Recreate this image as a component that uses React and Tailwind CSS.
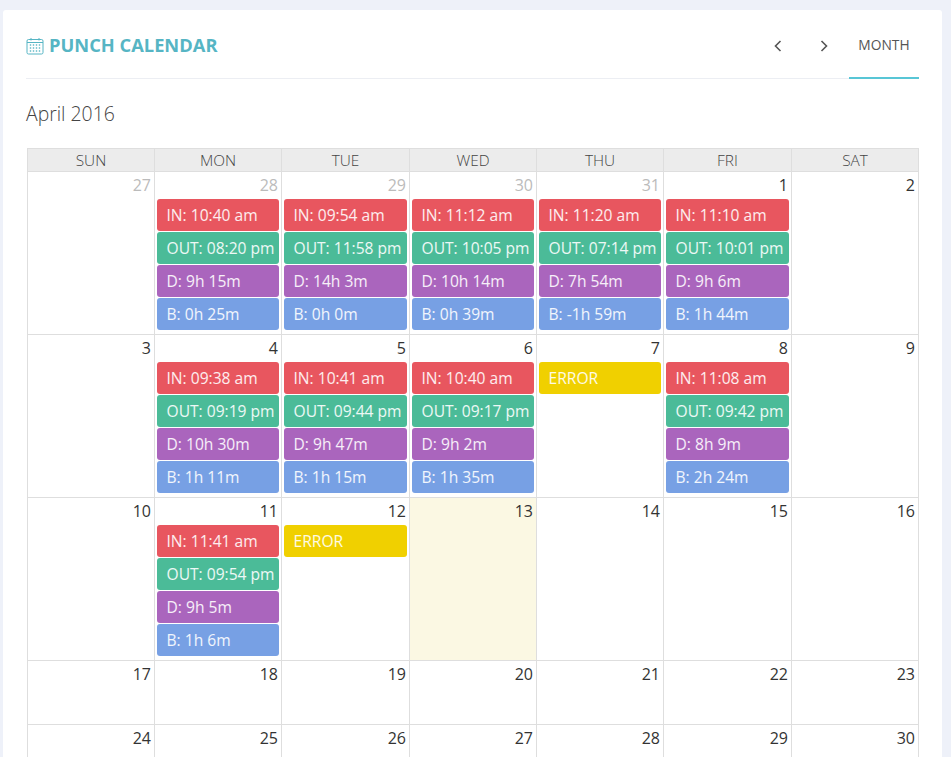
import React from "react";

const colors = { in: "bg-[#e8565f]", out: "bg-[#4bbb98]", d: "bg-[#aa65bd]", b: "bg-[#77a0e4]", err: "bg-[#f0d000]" };

const ev = (i, o, d, b) => [["in", "IN: " + i], ["out", "OUT: " + o], ["d", "D: " + d], ["b", "B: " + b]];
const err = [["err", "ERROR"]];

const weeks = [
  { h: "h-[163px]", days: [
    { n: 27, muted: true },
    { n: 28, muted: true, e: ev("10:40 am", "08:20 pm", "9h 15m", "0h 25m") },
    { n: 29, muted: true, e: ev("09:54 am", "11:58 pm", "14h 3m", "0h 0m") },
    { n: 30, muted: true, e: ev("11:12 am", "10:05 pm", "10h 14m", "0h 39m") },
    { n: 31, muted: true, e: ev("11:20 am", "07:14 pm", "7h 54m", "-1h 59m") },
    { n: 1, e: ev("11:10 am", "10:01 pm", "9h 6m", "1h 44m") },
    { n: 2 },
  ]},
  { h: "h-[163px]", days: [
    { n: 3 },
    { n: 4, e: ev("09:38 am", "09:19 pm", "10h 30m", "1h 11m") },
    { n: 5, e: ev("10:41 am", "09:44 pm", "9h 47m", "1h 15m") },
    { n: 6, e: ev("10:40 am", "09:17 pm", "9h 2m", "1h 35m") },
    { n: 7, e: err },
    { n: 8, e: ev("11:08 am", "09:42 pm", "8h 9m", "2h 24m") },
    { n: 9 },
  ]},
  { h: "h-[163px]", days: [
    { n: 10 },
    { n: 11, e: ev("11:41 am", "09:54 pm", "9h 5m", "1h 6m") },
    { n: 12, e: err },
    { n: 13, today: true },
    { n: 14 }, { n: 15 }, { n: 16 },
  ]},
  { h: "h-[64px]", days: [17, 18, 19, 20, 21, 22, 23].map((n) => ({ n })) },
  { h: "h-[64px]", days: [24, 25, 26, 27, 28, 29, 30].map((n) => ({ n })) },
];

const heads = ["SUN", "MON", "TUE", "WED", "THU", "FRI", "SAT"];

function CalIcon() {
  return (
    <svg width="18" height="18" viewBox="0 0 18 18" fill="none" stroke="#56b5c4" strokeWidth="1">
      <rect x="1" y="2.5" width="16" height="14.5" rx="1.5" />
      <path d="M1 5.5h16M5 1v2.5M13 1v2.5" />
      <g fill="#56b5c4" stroke="none">
        {[8, 11, 14].map((y) =>
          [4.5, 7.5, 10.5, 13.5].map((x) => <rect key={x + "-" + y} x={x - 0.7} y={y - 0.7} width="1.4" height="1.4" />)
        )}
      </g>
    </svg>
  );
}

function Chevron({ left }) {
  return (
    <svg width="8" height="12" viewBox="0 0 8 12" fill="none" stroke="#555" strokeWidth="1.6">
      <path d={left ? "M6.5 1L1.5 6l5 5" : "M1.5 1l5 5-5 5"} />
    </svg>
  );
}

export default function App() {
  return (
    <div className="h-[757px] w-[951px] overflow-hidden bg-[#eef1f9] pt-[10px] pl-[3px] font-['Open_Sans',sans-serif]">
      <div className="h-[800px] w-[939px] rounded-t-[3px] bg-white px-[23px]">
        <div className="flex h-[69px] items-stretch justify-between border-b border-[#eceef3]">
          <div className="flex items-center gap-[5px] pt-[3px]">
            <CalIcon />
            <h1 className="text-[18.3px] leading-none font-bold text-[#56b5c4]">PUNCH CALENDAR</h1>
          </div>
          <div className="flex items-stretch">
            <div className="flex items-center gap-[38px] pt-[3px] pr-[21px]"><Chevron left /><Chevron /></div>
            <div className="-mb-px flex w-[70px] items-center justify-center border-b-2 border-[#58c6d6] pt-[3px] text-[13.8px] text-[#555]">MONTH</div>
          </div>
        </div>
        <div className="h-[69px] pt-[22px] text-[19.4px] leading-[25px] font-light text-[#444]">April 2016</div>
        <table className="ml-px w-[892px] table-fixed border-collapse">
          <colgroup>
            <col className="w-[127px]" />
            <col className="w-[127px]" />
            <col className="w-[128px]" />
            <col className="w-[127px]" />
            <col className="w-[127px]" />
            <col className="w-[128px]" />
            <col className="w-[127px]" />
          </colgroup>
          <thead>
            <tr className="h-[23px]">
              {heads.map((h) => (
                <th key={h} className="border border-[#dedede] bg-[#ececec] p-0 pt-px text-center text-[15.4px] font-light leading-none text-[#444]">{h}</th>
              ))}
            </tr>
          </thead>
          <tbody>
            {weeks.map((w, i) => (
              <tr key={i} className={w.h}>
                {w.days.map((d) => (
                  <td key={d.n + "-" + i} className={"border border-[#dedede] p-0 align-top " + (d.today ? "bg-[#fbf8e3]" : "")}>
                    <div className={"pr-[3px] pt-[2px] text-right text-[16px] leading-[22px] " + (d.muted ? "text-[#bbbbbb]" : "text-[#333]")}>{d.n}</div>
                    <div className="mt-[3px] flex flex-col gap-px px-[2px]">
                      {(d.e || []).map(([k, t]) => (
                        <div key={k} className={"h-[32px] rounded-[3px] pl-[9.5px] text-[15.6px] leading-[32px] whitespace-nowrap text-white/90 " + colors[k]}>{t}</div>
                      ))}
                    </div>
                  </td>
                ))}
              </tr>
            ))}
          </tbody>
        </table>
      </div>
    </div>
  );
}
